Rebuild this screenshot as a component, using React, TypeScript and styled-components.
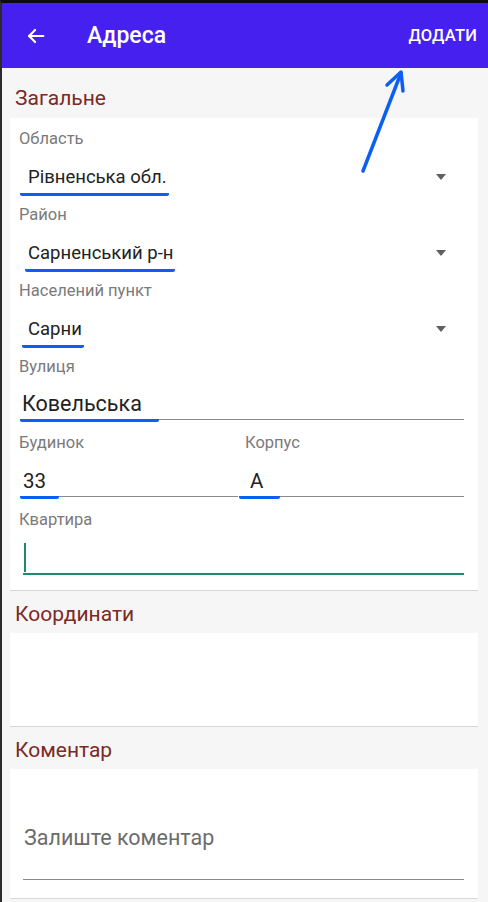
import React from 'react';
import styled, { createGlobalStyle } from 'styled-components';

const GlobalStyle = createGlobalStyle`
  html, body {
    margin: 0;
    padding: 0;
    background: #f6f6f6;
    font-family: Roboto, 'Noto Sans', 'Liberation Sans', sans-serif;
  }
`;

const Screen = styled.div`
  position: relative;
  box-sizing: border-box;
  width: 488px;
  min-height: 902px;
  border-top: 3px solid #0d0d0d;
  border-left: 2px solid #2b2b2b;
  background: #f6f6f6;
  overflow: hidden;
`;

const Header = styled.header`
  height: 65px;
  background: #4620ef;
  display: flex;
  align-items: center;
  padding: 0 11px 0 22px;
  color: #fff;
`;

const BackButton = styled.button`
  background: none;
  border: none;
  padding: 0;
  width: 24px;
  height: 24px;
  display: flex;
  align-items: center;
  justify-content: center;
  color: #fff;
`;

const Title = styled.h1`
  margin: 0 0 0 39px;
  font-size: 23px;
  font-weight: 500;
  flex: 1;
`;

const Action = styled.button`
  background: none;
  border: none;
  color: #fff;
  font-family: inherit;
  font-size: 16.5px;
  font-weight: 500;
  letter-spacing: 0.2px;
  padding: 0;
`;

const SectionTitle = styled.h2<{ $first?: boolean }>`
  margin: 0;
  padding: ${p => (p.$first ? '18px' : '11px')} 13px ${p => (p.$first ? '8px' : '7px')};
  font-size: 21px;
  line-height: 24px;
  font-weight: 400;
  color: #7b2a24;
`;

const Card = styled.section<{ $height?: number }>`
  margin: 0 10px 0 8px;
  background: #fff;
  border-bottom: 1px solid #d8d8d8;
  padding: 12px 14px 15px 0;
  min-height: ${p => (p.$height ? `${p.$height}px` : 'auto')};
  box-sizing: border-box;
`;

const Label = styled.div<{ $indent?: number }>`
  font-size: 16.5px;
  line-height: 18px;
  color: #7a7a7a;
  padding-left: ${p => p.$indent ?? 9}px;
`;

const SelectRow = styled.div`
  height: 58px;
  display: flex;
  align-items: center;
  justify-content: space-between;
  padding-right: 18px;
`;

const Marked = styled.span<{ $start: number; $lead: number }>`
  display: inline-block;
  font-size: 18.5px;
  line-height: 20px;
  color: #222;
  margin: 9px 0 0 ${p => p.$start}px;
  padding: 0 2px 6px ${p => p.$lead}px;
  border-bottom: 3px solid #0b5ff2;
  border-radius: 2px;
`;

const Caret = styled.span`
  width: 0;
  height: 0;
  border-left: 5px solid transparent;
  border-right: 5px solid transparent;
  border-top: 6px solid #5f5f5f;
`;

const InputLine = styled.div<{ $height: number; $start?: number }>`
  display: flex;
  align-items: flex-end;
  border-bottom: 1px solid #8a8a8a;
  margin: 0 0 14px ${p => p.$start ?? 10}px;
  height: ${p => p.$height}px;
`;

const InputText = styled.span<{ $size: number; $pad: number; $extra: number; $shift?: number }>`
  display: inline-block;
  font-size: ${p => p.$size}px;
  line-height: 24px;
  color: #222;
  margin: 0 0 -3px ${p => p.$shift ?? 0}px;
  padding: 0 ${p => p.$extra}px 3px ${p => p.$pad}px;
  border-bottom: 3px solid #0b5ff2;
  border-radius: 2px;
`;

const Pair = styled.div`
  display: grid;
  grid-template-columns: 228px 1fr;
`;

const ActiveInput = styled.div`
  margin: 13px 0 0 13px;
  height: 31px;
  border-bottom: 2px solid #1d8a6d;
  display: flex;
  align-items: flex-start;
`;

const Cursor = styled.span`
  width: 2px;
  height: 29px;
  background: #1d8a6d;
  margin: 1px 0 0 1px;
`;

const Placeholder = styled.div`
  margin: 45px 0 0 13px;
  padding: 0 0 29px 1px;
  font-size: 21.5px;
  line-height: 24px;
  color: #6c6c6c;
  border-bottom: 1px solid #8a8a8a;
`;

const Overlay = styled.svg`
  position: absolute;
  top: -3px;
  left: -2px;
  width: 488px;
  height: 902px;
  pointer-events: none;
`;

type SelectField = { label: string; value: string; start: number; lead: number };

const selects: SelectField[] = [
  { label: 'Область', value: 'Рівненська обл.', start: 10, lead: 8 },
  { label: 'Район', value: 'Сарненський р-н', start: 15, lead: 3 },
  { label: 'Населений пункт', value: 'Сарни', start: 12, lead: 6 },
];

const App: React.FC = () => {
  return (
    <>
      <GlobalStyle />
      <Screen>
        <Header>
          <BackButton aria-label="Назад">
            <svg width="22" height="22" viewBox="0 0 24 24" fill="none" stroke="#fff" strokeWidth="2.4" strokeLinecap="round" strokeLinejoin="round">
              <path d="M20 12H4.5" />
              <path d="M11 5.5L4.5 12l6.5 6.5" />
            </svg>
          </BackButton>
          <Title>Адреса</Title>
          <Action>ДОДАТИ</Action>
        </Header>

        <SectionTitle $first>Загальне</SectionTitle>
        <Card>
          {selects.map(field => (
            <div key={field.label}>
              <Label>{field.label}</Label>
              <SelectRow>
                <Marked $start={field.start} $lead={field.lead}>{field.value}</Marked>
                <Caret />
              </SelectRow>
            </div>
          ))}

          <Label>Вулиця</Label>
          <InputLine $height={43}>
            <InputText $size={21.5} $pad={2} $extra={17}>Ковельська</InputText>
          </InputLine>

          <Pair>
            <div>
              <Label>Будинок</Label>
              <InputLine $height={44}>
                <InputText $size={20.5} $pad={3} $extra={13}>33</InputText>
              </InputLine>
            </div>
            <div>
              <Label $indent={7}>Корпус</Label>
              <InputLine $height={44} $start={11}>
                <InputText $size={20.5} $pad={11} $extra={17} $shift={-10}>А</InputText>
              </InputLine>
            </div>
          </Pair>

          <Label>Квартира</Label>
          <ActiveInput>
            <Cursor />
          </ActiveInput>
        </Card>

        <SectionTitle>Координати</SectionTitle>
        <Card $height={94} />

        <SectionTitle>Коментар</SectionTitle>
        <Card $height={130}>
          <Placeholder>Залиште коментар</Placeholder>
        </Card>

        <Overlay viewBox="0 0 488 902">
          <g stroke="#0b5ff2" strokeWidth="3.5" strokeLinecap="round" strokeLinejoin="round" fill="none">
            <path d="M363 171L401 73" />
            <path d="M387 85L401 72L403 91" />
          </g>
        </Overlay>
      </Screen>
    </>
  );
};

export default App;
